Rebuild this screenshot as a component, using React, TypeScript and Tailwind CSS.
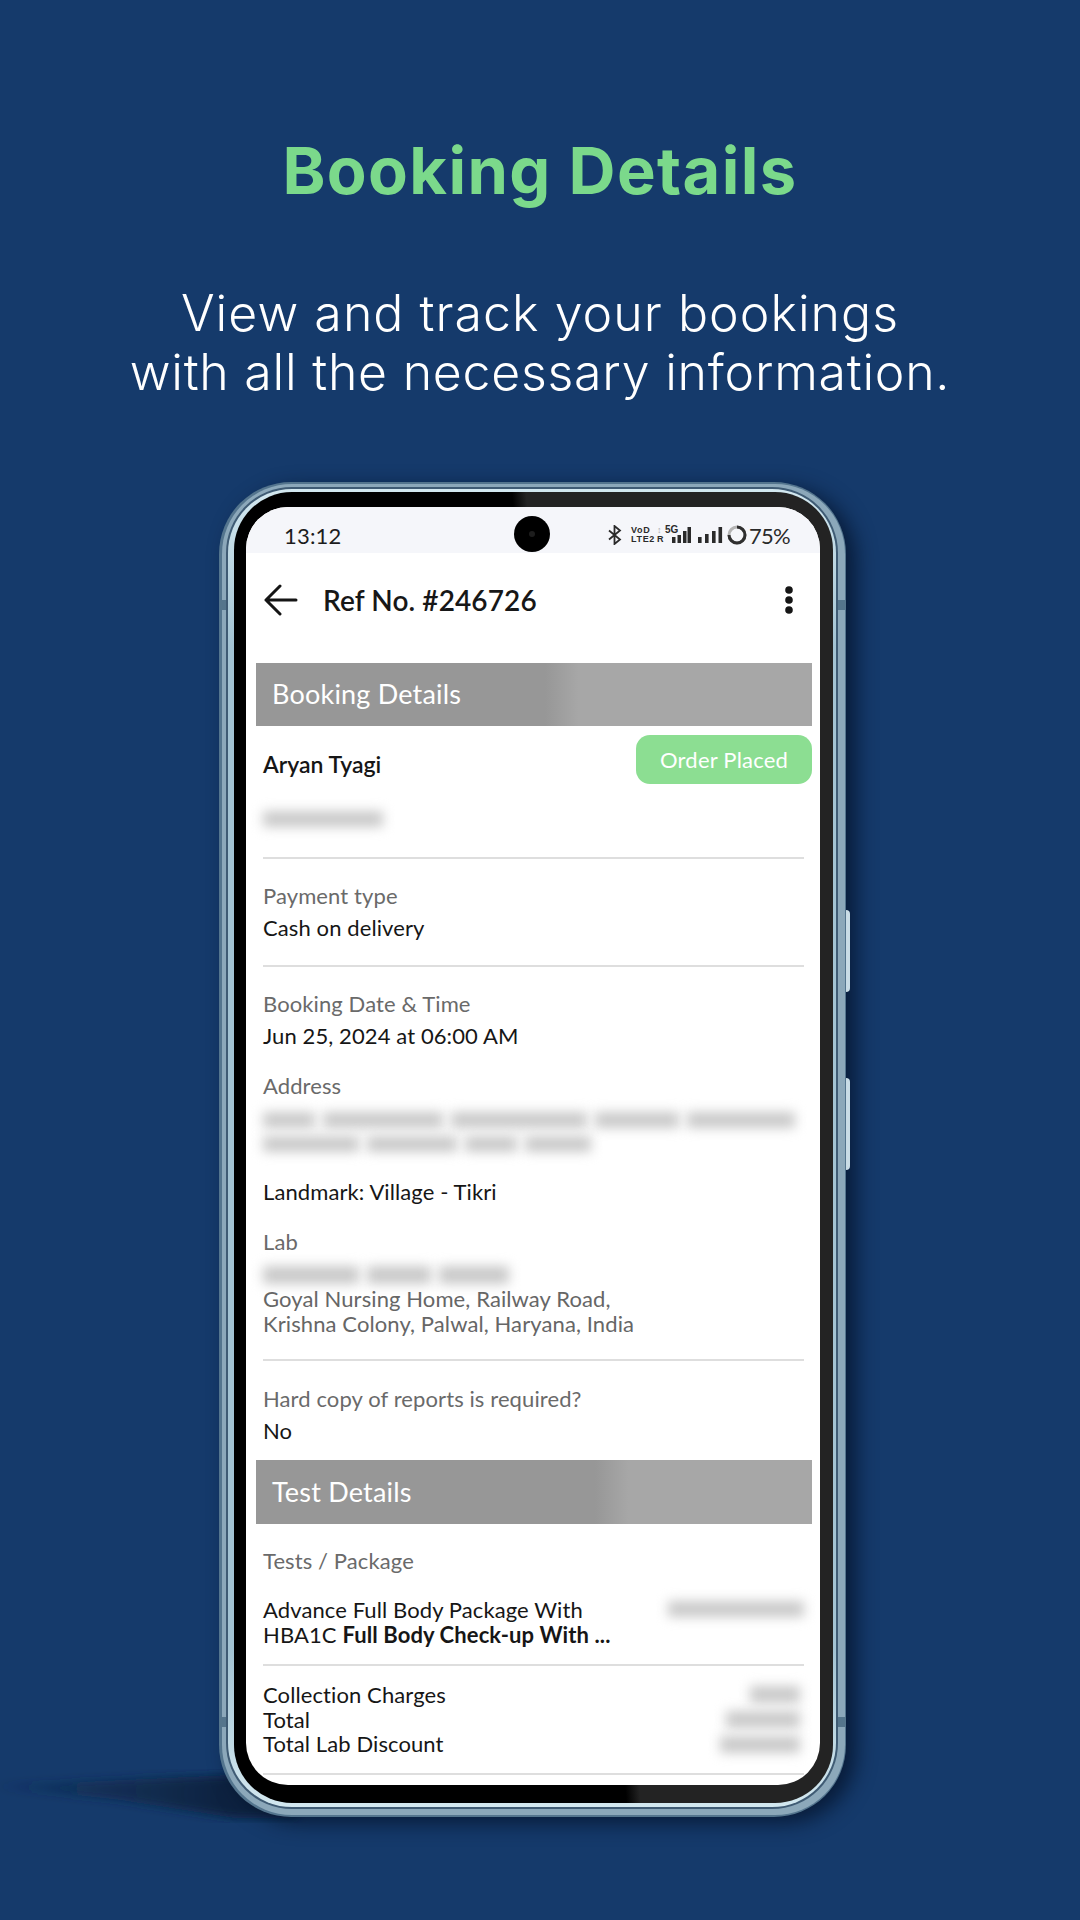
const line = "h-[2px] bg-[#dedede]";
const label = "-translate-y-[1px] leading-[25px] text-[22px] text-[#6a6a6a] tracking-[0.1px]";
const value = "-translate-y-[1px] leading-[25px] text-[22px] text-[#161616] tracking-[0.1px]";

function Smear({ className }: { className: string }) {
  return <div className={`bg-[#c9c9c9] blur-[6px] ${className}`} />;
}

function SectionBar({ title, fade }: { title: string; fade: string }) {
  return (
    <div className={`ml-[10px] mr-[8px] flex items-center pl-[16px] text-[27px] text-white tracking-[0.2px] ${fade}`}>
      {title}
    </div>
  );
}

function StatusIcons() {
  return (
    <div className="flex items-center text-[#2a2a2a]">
      <svg width="14" height="20" viewBox="0 0 14 20" fill="none" stroke="#2a2a2a" strokeWidth="1.8">
        <path d="M1 5.5l11 9-5.5 4.5V1L12 5.5l-11 9" />
      </svg>
      <div className="ml-[9px] flex w-[22px] flex-col font-['Liberation_Sans'] text-[9px] font-bold leading-[9px] tracking-[0.7px]">
        <span>VoD</span>
        <span>LTE2</span>
      </div>
      <div className="ml-[4px] flex w-[8px] flex-col font-['Liberation_Sans'] text-[9px] font-bold leading-[9px]">
        <span className="text-[#aaaaaa]">↕</span>
        <span>R</span>
      </div>
      <div className="relative h-[18px] w-[26px]">
        <span className="absolute -top-[1px] left-0 font-['Liberation_Sans'] text-[10px] font-bold leading-[10px]">5G</span>
        <svg className="absolute left-0 top-0" width="26" height="18" viewBox="0 0 26 18" fill="#2a2a2a">
          <rect x="7" y="11" width="3.5" height="6" />
          <rect x="12.5" y="9" width="3.5" height="8" />
          <rect x="18" y="5" width="3.5" height="12" />
          <rect x="22.5" y="1" width="3.5" height="16" />
        </svg>
      </div>
      <svg className="ml-[7px]" width="25" height="18" viewBox="0 0 25 18" fill="#2a2a2a">
        <rect x="0" y="11" width="3.6" height="6" />
        <rect x="7" y="8" width="3.6" height="9" />
        <rect x="14" y="5" width="3.6" height="12" />
        <rect x="20.5" y="1" width="3.6" height="16" />
      </svg>
      <svg className="ml-[4px]" width="20" height="20" viewBox="0 0 20 20" fill="none" strokeWidth="3">
        <circle cx="10" cy="10" r="8" stroke="#b5b5b5" />
        <path d="M10 2a8 8 0 1 1-8 8" stroke="#2f2f2f" />
      </svg>
      <span className="ml-[2px] text-[22px] tracking-[-0.7px]">75%</span>
    </div>
  );
}

export default function App() {
  return (
    <div className="relative h-[1920px] w-[1080px] overflow-hidden bg-[#153a6b] font-['Lato',sans-serif]">
      <svg className="absolute left-0 top-[1740px]" width="340" height="110" viewBox="0 0 340 110">
        <defs>
          <linearGradient id="cast" x1="0" x2="1" y1="0" y2="0">
            <stop offset="0" stopColor="#0d2747" stopOpacity="0.1" />
            <stop offset="0.35" stopColor="#0d2747" stopOpacity="0.6" />
            <stop offset="0.75" stopColor="#0b2341" stopOpacity="1" />
          </linearGradient>
          <filter id="soft"><feGaussianBlur stdDeviation="5" /></filter>
        </defs>
        <polygon points="-10,46 250,34 300,78 235,78 120,60" fill="url(#cast)" filter="url(#soft)" />
      </svg>

      <div className="relative flex flex-col items-center pt-[136px]">
        <h1 className="font-['Inter'] text-[65px] font-bold leading-[70px] text-[#7bd98b] tracking-[1.4px]">Booking Details</h1>
        <p className="mt-[78px] text-center font-['Inter'] text-[50px] font-light leading-[59px] text-white tracking-[1.05px]">
          View and track your bookings
          <br />
          <span className="tracking-[0.75px]">with all the necessary information.</span>
        </p>
      </div>

      {/* phone body */}
      <div className="relative ml-[219px] mt-[80px] h-[1335px] w-[627px] rounded-[72px] bg-[#54758e] pb-[2px] pl-[3px] pr-[1px] pt-[2px] shadow-[10px_6px_20px_rgba(4,18,40,0.75)]">
        <div className="absolute right-[-4px] top-[428px] h-[82px] w-[4px] rounded-r-sm bg-[#c9dce6]" />
        <div className="absolute right-[-4px] top-[596px] h-[92px] w-[4px] rounded-r-sm bg-[#c9dce6]" />
        <div className="absolute left-0 top-[118px] h-[10px] w-[7px] bg-[#55758c]" />
        <div className="absolute right-0 top-[118px] h-[10px] w-[8px] bg-[#55758c]" />
        <div className="absolute bottom-[90px] left-0 h-[10px] w-[7px] bg-[#55758c]" />
        <div className="absolute bottom-[90px] right-0 h-[10px] w-[8px] bg-[#55758c]" />

        <div className="h-full rounded-[70px] bg-[#8ca8ba] pb-[6px] pl-[4px] pr-[7px] pt-[3px]">
          <div className="h-full rounded-[66px] bg-[#3f5b74] p-[2px]">
            <div className="h-full rounded-[64px] bg-[linear-gradient(180deg,#d3e8f0,#a3c3d3_12%,#a3c3d3_88%,#d3e8f0)] pb-[4px] pl-[6px] pr-[3px] pt-[3px]">
              {/* bezel */}
              <div className="h-full rounded-[58px] bg-[linear-gradient(85deg,#000000_55%,#232323_57%)] pb-[18px] pl-[12px] pr-[13px] pt-[15px]">
                <div className="h-[1278px] overflow-hidden rounded-[42px] bg-white">
                  {/* status bar */}
                  <div className="relative flex h-[46px] items-center justify-between bg-[#f5f6fa] pl-[38px] pr-[30px] pt-[10px] text-[22px] text-[#1c1c1c]">
                    <span className="tracking-[0.2px]">13:12</span>
                    <div className="absolute left-[268px] top-[9px] flex h-[36px] w-[36px] items-center justify-center rounded-full bg-black">
                      <div className="h-[6px] w-[6px] rounded-full bg-[#1d1d1d]" />
                    </div>
                    <StatusIcons />
                  </div>

                  {/* app bar */}
                  <div className="flex h-[110px] items-center justify-between pb-[16px] pl-[18px] pr-[26px]">
                    <div className="flex items-center">
                      <svg width="34" height="32" viewBox="0 0 34 32" fill="none" stroke="#151515" strokeWidth="3" strokeLinecap="round" strokeLinejoin="round">
                        <path d="M32 16H2M16 2L2 16l14 14" />
                      </svg>
                      <span className="ml-[25px] text-[28px] font-semibold text-[#171717] tracking-[0.1px]">Ref No. #246726</span>
                    </div>
                    <svg width="10" height="30" viewBox="0 0 10 30" fill="#161616">
                      <circle cx="5" cy="5" r="3.8" />
                      <circle cx="5" cy="15" r="3.8" />
                      <circle cx="5" cy="25" r="3.8" />
                    </svg>
                  </div>

                  <SectionBar title="Booking Details" fade="h-[63px] bg-[linear-gradient(90deg,#979797_52%,#a7a7a7_58%)]" />

                  <div className="mt-[9px] flex items-start justify-between pl-[17px] pr-[8px]">
                    <span className="mt-[17px] text-[23px] font-semibold leading-[25px] text-[#161616]">Aryan Tyagi</span>
                    <div className="flex h-[49px] w-[176px] items-center justify-center rounded-[14px] bg-[#8cde92] text-[22px] text-white tracking-[0.2px]">Order Placed</div>
                  </div>

                  <div className="pl-[17px] pr-[16px]">
                    <Smear className="mt-[27px] h-[16px] w-[120px]" />

                    <div className={`mt-[30px] ${line}`} />
                    <div className={`mt-[25px] ${label}`}>Payment type</div>
                    <div className={`mt-[7px] ${value}`}>Cash on delivery</div>

                    <div className={`mt-[24px] ${line}`} />
                    <div className={`mt-[25px] ${label}`}>Booking Date &amp; Time</div>
                    <div className={`mt-[7px] ${value}`}>Jun 25, 2024 at 06:00 AM</div>

                    <div className={`mt-[25px] ${label}`}>Address</div>
                    <div className="mt-[13px] flex h-[16px] gap-[8px]">
                      <Smear className="w-[52px]" />
                      <Smear className="w-[120px]" />
                      <Smear className="w-[136px]" />
                      <Smear className="w-[84px]" />
                      <Smear className="w-[108px]" />
                    </div>
                    <div className="mt-[8px] flex h-[16px] gap-[8px]">
                      <Smear className="w-[96px]" />
                      <Smear className="w-[90px]" />
                      <Smear className="w-[52px]" />
                      <Smear className="w-[66px]" />
                    </div>

                    <div className={`mt-[28px] ${value}`}>Landmark: Village - Tikri</div>
                    <div className={`mt-[25px] ${label}`}>Lab</div>
                    <div className="mt-[11px] flex h-[18px] gap-[8px]">
                      <Smear className="w-[96px]" />
                      <Smear className="w-[64px]" />
                      <Smear className="w-[70px]" />
                    </div>
                    <div className="mt-[4px] -translate-y-[1px] text-[22px] leading-[24.5px] text-[#666666] tracking-[0.1px]">
                      Goyal Nursing Home, Railway Road,
                      <br />
                      Krishna Colony, Palwal, Haryana, India
                    </div>

                    <div className={`mt-[22px] ${line}`} />
                    <div className={`mt-[26px] ${label}`}>Hard copy of reports is required?</div>
                    <div className={`mt-[7px] ${value}`}>No</div>
                  </div>

                  <div className="mt-[16px]">
                    <SectionBar title="Test Details" fade="h-[64px] bg-[linear-gradient(90deg,#979797_61%,#a7a7a7_67%)]" />
                  </div>

                  <div className="pl-[17px] pr-[16px]">
                    <div className={`mt-[25px] ${label}`}>Tests / Package</div>
                    <div className="mt-[24px] flex items-start justify-between">
                      <div className="-translate-y-[1px] text-[22px] leading-[25px] text-[#161616] tracking-[0.1px]">
                        Advance Full Body Package With
                        <br />
                        HBA1C <b className="font-bold">Full Body Check-up With ...</b>
                      </div>
                      <Smear className="mt-[3px] h-[16px] w-[136px]" />
                    </div>

                    <div className={`mt-[16px] ${line}`} />
                    <div className="mt-[18px] flex justify-between">
                      <div className="-translate-y-[1px] text-[22px] leading-[24.5px] text-[#161616] tracking-[0.1px]">
                        Collection Charges
                        <br />
                        Total
                        <br />
                        Total Lab Discount
                      </div>
                      <div className="flex flex-col items-end gap-[8px] pr-[4px] pt-[2px]">
                        <Smear className="h-[17px] w-[50px]" />
                        <Smear className="h-[17px] w-[74px]" />
                        <Smear className="h-[17px] w-[80px]" />
                      </div>
                    </div>
                    <div className={`mt-[15px] ${line}`} />
                  </div>
                </div>
              </div>
            </div>
          </div>
        </div>
      </div>
    </div>
  );
}
